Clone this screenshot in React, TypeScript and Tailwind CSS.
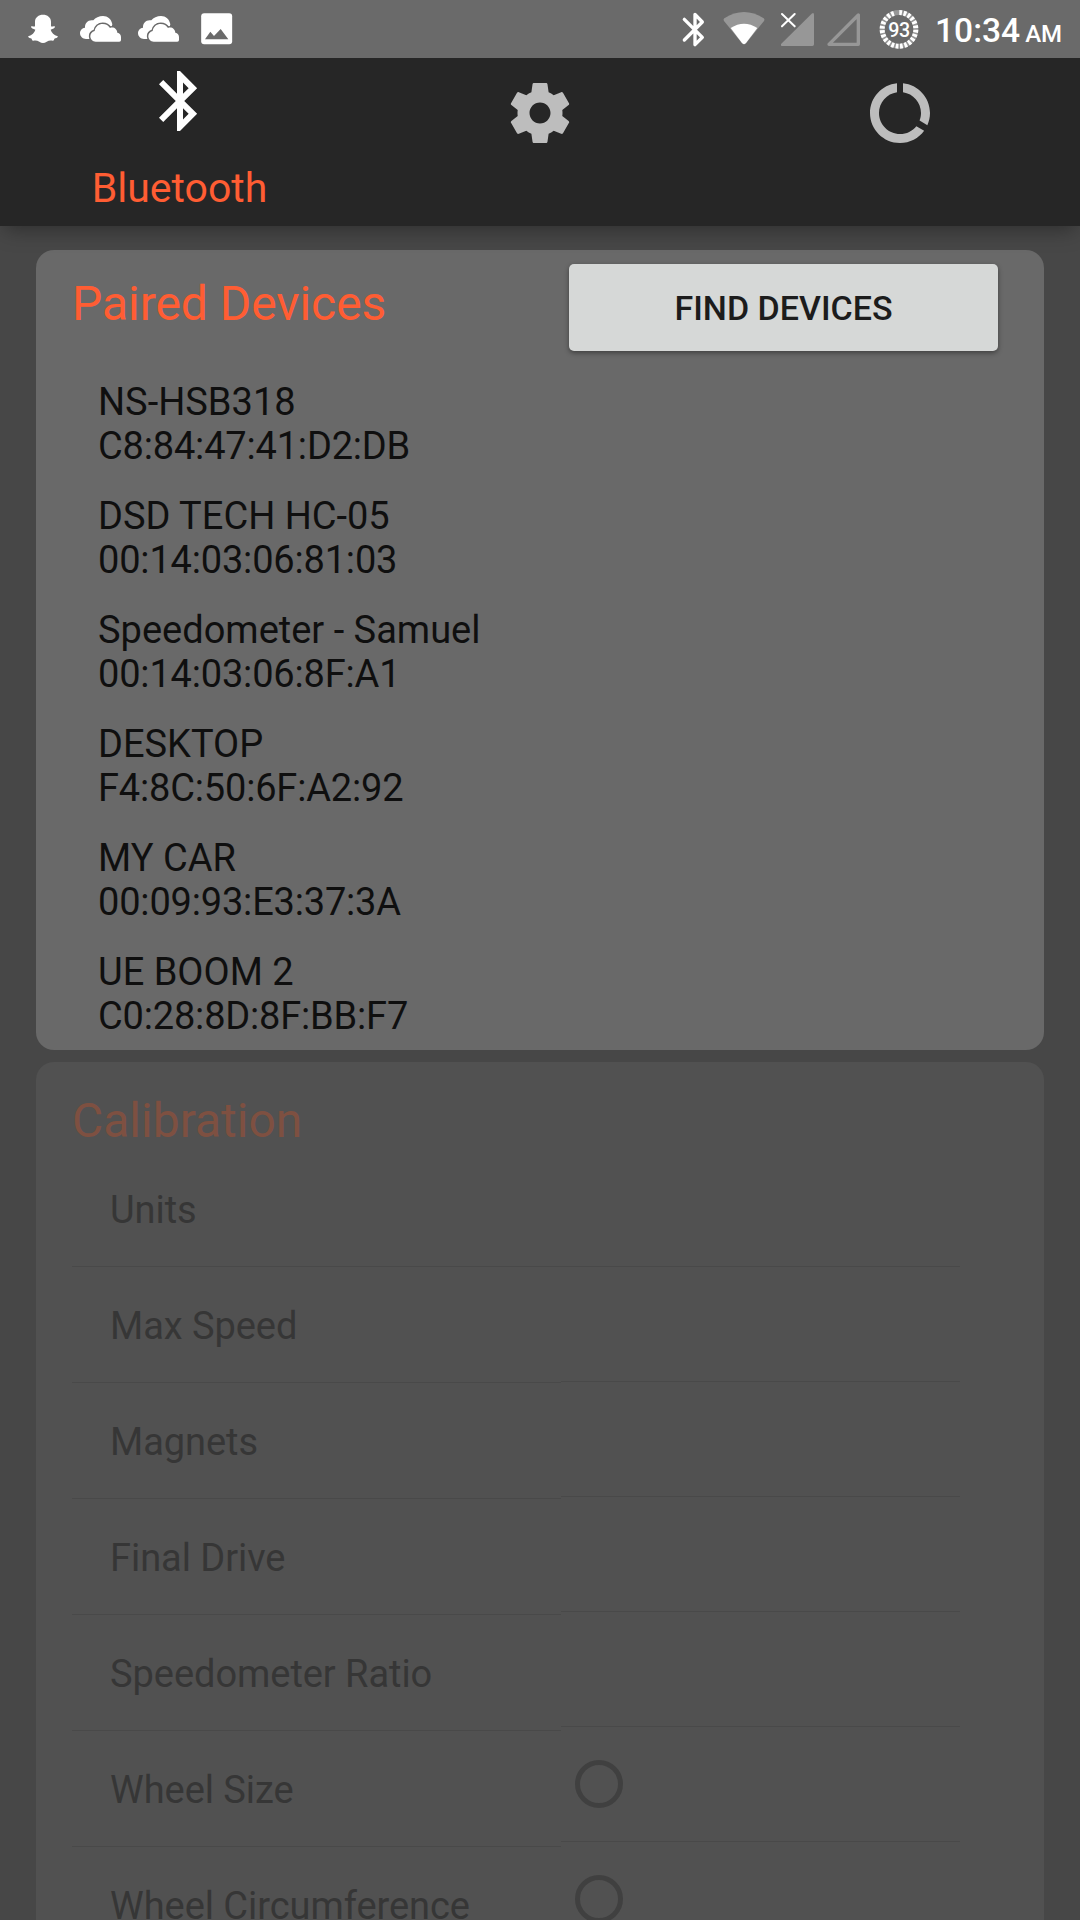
import React from "react";

const pairedDevices = [
  { name: "NS-HSB318", address: "C8:84:47:41:D2:DB" },
  { name: "DSD TECH HC-05", address: "00:14:03:06:81:03" },
  { name: "Speedometer - Samuel", address: "00:14:03:06:8F:A1" },
  { name: "DESKTOP", address: "F4:8C:50:6F:A2:92" },
  { name: "MY CAR", address: "00:09:93:E3:37:3A" },
  { name: "UE BOOM 2", address: "C0:28:8D:8F:BB:F7" },
];

const settings = [
  { label: "Units", radio: false },
  { label: "Max Speed", radio: false },
  { label: "Magnets", radio: false },
  { label: "Final Drive", radio: false },
  { label: "Speedometer Ratio", radio: false },
  { label: "Wheel Size", radio: true },
  { label: "Wheel Circumference", radio: true },
];

function GhostIcon() {
  return (
    <svg viewBox="84 0 90 174" className="h-[58px] w-[30px] shrink-0" fill="#fff">
      <path d="M129 44C142 44 153 52 153 65V79C157 81 160 77 164 79C167 83 160 86 152 89C154 98 162 105 173 109C176 112 167 115 163 116C162 119 162 122 158 122C152 121 146 121 140 125C133 130 125 130 118 125C112 121 106 121 100 122C96 122 96 119 95 116C91 115 82 112 85 109C96 105 104 98 106 89C98 86 91 83 94 79C98 77 101 81 105 79V65C105 52 116 44 129 44Z" />
    </svg>
  );
}

function FrontCloud() {
  return (
    <path d="M287 125C278 125 271 118 271 109C271 101 276 95 284 93C286 80 296 72 308 72C318 72 326 77 330 84C341 80 351 87 352 98C359 99 363 104 363 111V120Q363 125 358 125Z" />
  );
}

function CloudsIcon() {
  return (
    <svg viewBox="240 0 123 174" className="h-[58px] w-[41px] shrink-0">
      <path
        fill="#fff"
        d="M258 117C248 117 240 109 240 100C240 91 246 84 255 83C254 69 265 58 280 61C286 53 297 48 309 48C323 48 334 57 337 73L330 100L290 117Z"
      />
      <g fill="#6a6a6a" stroke="#6a6a6a" strokeWidth="9" strokeLinejoin="round">
        <FrontCloud />
      </g>
      <g fill="#fff">
        <FrontCloud />
      </g>
    </svg>
  );
}

function ImageIcon() {
  return (
    <svg viewBox="604 0 94 174" className="h-[58px] w-[31.33px] shrink-0">
      <rect x="604.5" y="40" width="93" height="93" rx="9" fill="#fff" />
      <path d="M616 118L632 95L643 108L663 87L686 118Z" fill="#6a6a6a" />
    </svg>
  );
}

function StatusBluetooth() {
  return (
    <svg viewBox="69 0 63 174" className="h-[58px] w-[21px] shrink-0 overflow-visible">
      <path
        d="M73 58L127 112L105 134V43L127 66L73 120"
        fill="none"
        stroke="#fff"
        strokeWidth="10"
        strokeLinecap="round"
        strokeLinejoin="round"
      />
    </svg>
  );
}

function WifiIcon() {
  return (
    <svg viewBox="189 0 126 174" className="h-[58px] w-[42px] shrink-0">
      <path d="M193 55Q252 17 311 55Q315 59 312 63L258 130Q252 136 246 130L192 63Q189 59 193 55Z" fill="#979797" />
      <path d="M212 84Q252 58 292 84L258 129Q252 136 246 129Z" fill="#fff" />
    </svg>
  );
}

function NoSimIcon() {
  return (
    <svg viewBox="363 0 99 174" className="h-[58px] w-[33px] shrink-0">
      <path d="M455 41Q462 36 462 44V133Q462 138 457 138H368Q360 138 364 131Z" fill="#979797" />
      <path d="M366 42L404 79M404 42L366 79" stroke="#fff" strokeWidth="6" strokeLinecap="round" />
    </svg>
  );
}

function EmptySignalIcon() {
  return (
    <svg viewBox="501 0 99 174" className="h-[58px] w-[33px] shrink-0">
      <path d="M595 45V133H507Z" fill="none" stroke="#979797" strokeWidth="10" strokeLinejoin="round" />
    </svg>
  );
}

function BatteryIcon() {
  return (
    <svg viewBox="657 0 120 174" className="h-[58px] w-[40px] shrink-0">
      <circle cx="717" cy="88" r="50.5" fill="none" stroke="#979797" strokeWidth="15" />
      <circle
        cx="717"
        cy="88"
        r="50.5"
        pathLength="100"
        fill="none"
        stroke="#fff"
        strokeWidth="15"
        strokeDasharray="2.6 1.57 2.6 1.57 2.6 1.57 2.6 1.57 2.6 1.57 2.6 1.57 2.6 1.57 2.6 1.57 2.6 1.57 2.6 1.57 2.6 1.57 2.6 1.57 2.6 1.57 2.6 1.57 2.6 1.57 2.6 1.57 2.6 1.57 2.6 1.57 2.6 1.57 2.6 1.57 2.6 1.57 2.6 1.57 2.6 5.65"
        transform="rotate(-89 717 88)"
      />
      <text x="717" y="110" textAnchor="middle" fill="#fff" fontSize="59" fontWeight="500" letterSpacing="-1.5">
        93
      </text>
    </svg>
  );
}

function StatusBar() {
  return (
    <div className="relative z-20 flex h-[58px] items-start bg-[#6a6a6a] pl-7">
      <GhostIcon />
      <div className="ml-[22px] flex gap-[17px]">
        <CloudsIcon />
        <CloudsIcon />
      </div>
      <div className="ml-[22.33px] flex">
        <ImageIcon />
      </div>
      <div className="ml-auto flex w-[397px] items-start">
        <StatusBluetooth />
        <div className="ml-[19px]">
          <WifiIcon />
        </div>
        <div className="ml-4">
          <NoSimIcon />
        </div>
        <div className="ml-[13px]">
          <EmptySignalIcon />
        </div>
        <div className="ml-[19px]">
          <BatteryIcon />
        </div>
        <div className="ml-4 mt-[11px] flex items-baseline whitespace-nowrap font-medium leading-[39px] text-white">
          <span className="text-[33.6px]">10:34</span>
          <span className="ml-[5px] text-[24px]">AM</span>
        </div>
      </div>
    </div>
  );
}

function TabBar() {
  return (
    <nav className="relative z-10 grid h-[168px] grid-cols-3 bg-[#262626] shadow-[0_8px_20px_-5px_rgba(0,0,0,0.38)]">
      <div className="flex flex-col items-center pt-[7px]">
        <svg viewBox="0 0 24 24" className="size-[72px]" fill="#fff">
          <path d="M17.71 7.71L12 2h-1v7.59L6.41 5 5 6.41 10.59 12 5 17.59 6.41 19 11 14.41V22h1l5.71-5.71-4.3-4.29 4.3-4.29zM13 5.83l1.88 1.88L13 9.59V5.83zm1.88 10.46L13 18.17v-3.76l1.88 1.88z" />
        </svg>
        <span className="mr-px mt-[27px] text-[41px] leading-[48px] text-[#ff5d33]">Bluetooth</span>
      </div>
      <div className="flex justify-center pt-[19px]">
        <svg viewBox="0 0 24 24" className="size-[72px]" fill="#bdbdbd">
          <path d="M19.43 12.98c.04-.32.07-.64.07-.98s-.03-.66-.07-.98l2.11-1.65c.19-.15.24-.42.12-.64l-2-3.46c-.12-.22-.39-.3-.61-.22l-2.49 1c-.52-.4-1.08-.73-1.69-.98l-.38-2.65C14.46 2.18 14.25 2 14 2h-4c-.25 0-.46.18-.49.42l-.38 2.65c-.61.25-1.17.59-1.69.98l-2.49-1c-.23-.09-.49 0-.61.22l-2 3.46c-.13.22-.07.49.12.64l2.11 1.65c-.04.32-.07.65-.07.98s.03.66.07.98l-2.11 1.65c-.19.15-.24.42-.12.64l2 3.46c.12.22.39.3.61.22l2.49-1c.52.4 1.08.73 1.69.98l.38 2.65c.03.24.24.42.49.42h4c.25 0 .46-.18.49-.42l.38-2.65c.61-.25 1.17-.59 1.69-.98l2.49 1c.23.09.49 0 .61-.22l2-3.46c.12-.22.07-.49-.12-.64l-2.11-1.65zM12 15.5c-1.93 0-3.5-1.57-3.5-3.5s1.57-3.5 3.5-3.5 3.5 1.57 3.5 3.5-1.57 3.5-3.5 3.5z" />
        </svg>
      </div>
      <div className="flex justify-center pt-[19px]">
        <svg viewBox="0 0 24 24" className="size-[72px]" fill="#bdbdbd">
          <path d="M13 2.05v3.03c3.39.49 6 3.39 6 6.92 0 .9-.18 1.75-.48 2.54l2.6 1.53c.56-1.24.88-2.62.88-4.07 0-5.18-3.95-9.45-9-9.95zM12 19c-3.87 0-7-3.13-7-7 0-3.53 2.61-6.43 6-6.92V2.05c-5.06.5-9 4.76-9 9.95 0 5.52 4.47 10 9.99 10 3.31 0 6.24-1.61 8.06-4.09l-2.6-1.53C16.17 17.98 14.21 19 12 19z" />
        </svg>
      </div>
    </nav>
  );
}

export default function App() {
  return (
    <div className="flex h-[1920px] w-[1080px] flex-col overflow-hidden bg-[#474747] font-['Roboto',sans-serif]">
      <StatusBar />
      <TabBar />
      <main className="flex min-h-0 flex-1 flex-col gap-3 overflow-hidden px-9 pt-6">
        <section className="h-[800px] shrink-0 overflow-hidden rounded-[18px] bg-[#696969]">
          <div className="flex h-[117px] items-start justify-between pl-9 pr-[46px]">
            <h2 className="mt-[26px] text-[48px] leading-[56px] tracking-[-0.05px] text-[#ff5d33]">Paired Devices</h2>
            <button className="mt-[14px] h-[87px] w-[429px] rounded-[5px] bg-[#d6d8d7] pt-[2px] text-[34px] font-medium leading-[39px] text-[#1c1c1c] shadow-[0_2px_5px_rgba(0,0,0,0.4)]">
              FIND DEVICES
            </button>
          </div>
          <ul className="pl-[62px] text-[38px] leading-[44px] text-[#0f0f0f]">
            {pairedDevices.map((d) => (
              <li key={d.address} className="h-[114px] pt-[13px]">
                <div>{d.name}</div>
                <div className="tracking-[-0.18px]">{d.address}</div>
              </li>
            ))}
          </ul>
        </section>
        <section className="h-[900px] shrink-0 rounded-t-[18px] bg-[#515151] pl-9 pt-[31px]">
          <h2 className="h-[58px] text-[48px] leading-[56px] text-[#7e5041]">Calibration</h2>
          <div className="flex items-start">
            <div className="w-[489px]">
              {settings.map((s) => (
                <div
                  key={s.label}
                  className="h-[116px] border-b border-[#494949] pl-[38px] pt-[37px] text-[38px] leading-[44px] tracking-[-0.05px] text-[#363636]"
                >
                  {s.label}
                </div>
              ))}
            </div>
            <div className="mt-px w-[399px]">
              {settings.map((s) => (
                <div key={s.label} className="flex h-[115px] items-center border-b border-[#494949] pb-px pl-[14px]">
                  {s.radio && <span className="size-12 rounded-full border-[5px] border-[#404040]" />}
                </div>
              ))}
            </div>
          </div>
        </section>
      </main>
    </div>
  );
}
